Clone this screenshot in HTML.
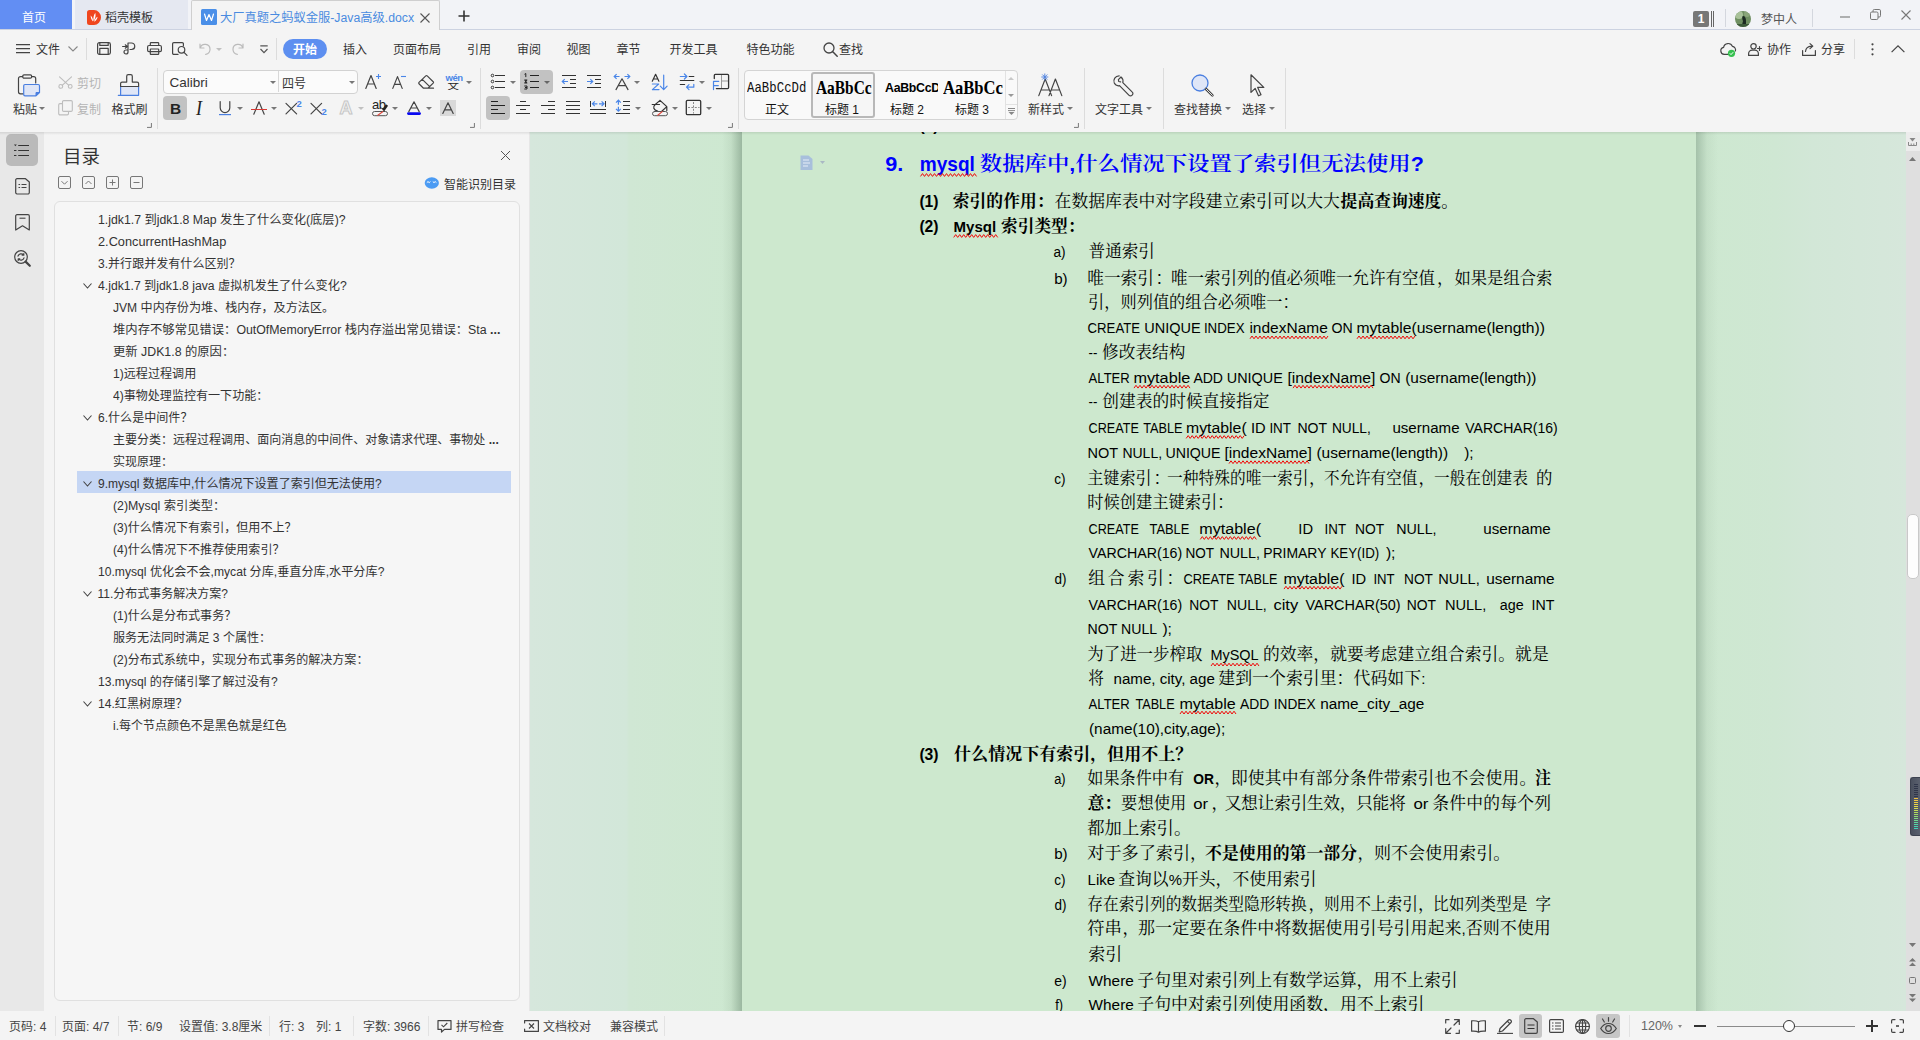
<!DOCTYPE html>
<html lang="zh-CN"><head><meta charset="utf-8"><title>大厂真题之蚂蚁金服-Java高级.docx</title>
<style>
html,body{margin:0;padding:0}
body{width:1920px;height:1040px;position:relative;overflow:hidden;background:#f4f4f4;
 font-family:"Liberation Sans","Noto Sans CJK SC",sans-serif;font-size:12px;color:#333;line-height:1}
.a{position:absolute}
.t{position:absolute;white-space:nowrap;line-height:1}
svg{position:absolute;overflow:visible}
.ic{fill:none;stroke:#444;stroke-width:1.2;stroke-linecap:round;stroke-linejoin:round}
/* tab bar */
#tabbar{left:0;top:0;width:1920px;height:29px;background:#f2f3f7;border-bottom:1px solid #ccd2e1}
#tab1{left:0;top:0;width:72px;height:29px;background:#628ef3;color:#fff}
#tab2{left:75px;top:0;width:113px;height:29px;background:#e5e8f1}
#tab3{left:191px;top:0;width:249px;height:30px;background:#f4f4f4;border:1px solid #cfcfcf;border-bottom:none;box-sizing:border-box;border-radius:2px 2px 0 0}
/* menubar */
#menubar{left:0;top:30px;width:1920px;height:36px;background:#f4f4f4}
#ribbon{left:0;top:66px;width:1920px;height:64px;background:#f4f4f4}
.sep{position:absolute;width:1px;background:#dcdcdc}
.m{position:absolute;top:44px;font-size:12px;color:#333;white-space:nowrap}
.dd{position:absolute;width:0;height:0;border-left:3.2px solid transparent;border-right:3.2px solid transparent;border-top:3.8px solid #777;margin-left:-0.4px}
.lbl{position:absolute;font-size:12px;color:#333;white-space:nowrap}
/* left */
#leftnav{left:0;top:132px;width:44px;height:879px;background:#e8e8e8}
#toc{left:44px;top:132px;width:485px;height:879px;background:#f4f4f4}
#tocbox{left:53.500px;top:201px;width:466px;height:800px;border:1px solid #e0e0e0;border-radius:6px;box-sizing:border-box;background:#f6f6f6}
.ti{position:absolute;font-size:12px;color:#333;white-space:nowrap;line-height:14px}
/* doc */
#docarea{left:530px;top:132px;width:1376px;height:879px;overflow:hidden;
 background:linear-gradient(90deg,#d6e7dc 0%,#d2e7d9 7%,#d0e7d4 7.200%,#cde8d0 15.400%,#cde8d0 84.700%,#cfe7d3 90.500%,#d2e7d7 93.200%,#d6e7db 100%)}
#page{left:742px;top:132px;width:954px;height:879px;background:#cde8ce}
.dl{position:absolute;white-space:nowrap;font-size:16.8px;line-height:20px;color:#000;font-family:"Liberation Sans","Noto Serif CJK SC",serif;transform-origin:0 50%}
.en{font-size:15.2px}
.b{font-weight:bold}
.wv{text-decoration:underline wavy #e03020 1px;text-underline-offset:2px;text-decoration-skip-ink:none}
#vscroll{left:1906px;top:132px;width:14px;height:879px;background:#dfdfdf}
#status{left:0;top:1011px;width:1920px;height:29px;background:#f4f4f4}
.st{position:absolute;top:1021px;font-size:12px;color:#444;white-space:nowrap}
</style></head><body>
<div class="a" id="tabbar"></div><div class="a" id="tab1"><span class="t" style="left:22px;top:11.8px;color:#fff">首页</span></div><div class="a" id="tab2">
<svg style="left:12px;top:10px" width="14" height="15" viewBox="0 0 14 15"><path d="M2.5 0H7a7 7.5 0 0 1 0 15H2.5A2.500 2.500 0 0 1 0 12.500v-10A2.500 2.500 0 0 1 2.500 0z" fill="#f0461e"/><path d="M3.600 5.500c.2 2.800 1 4.600 2.400 6 .1-2.300-.6-4.300-2.400-6zM8.300 2.800c-1.600 2.300-2.200 5-1.800 8.400 1.800-2.300 2.500-5 1.800-8.400zM10.600 6.800c-1.700 1-2.900 2.600-3.500 4.900 1.900-.8 3.100-2.400 3.500-4.900z" fill="#fff"/></svg>
<span class="t" style="left:30px;top:11.8px;color:#333">稻壳模板</span></div><div class="a" id="tab3">
<svg style="left:9px;top:8px" width="16" height="16" viewBox="0 0 16 16"><rect width="16" height="16" rx="1.5" fill="#4a8fe8"/><path d="M3.5 5l2 6.5L8 5.5l2.5 6 2-6.5" fill="none" stroke="#fff" stroke-width="1.2" stroke-linejoin="round" stroke-linecap="round"/></svg>
<span class="t" style="left:27.500px;top:10.800px;color:#4a8be0;transform:scaleX(1.021);transform-origin:0 50%">大厂真题之蚂蚁金服-Java高级.docx</span>
<svg style="left:228px;top:12px" width="10" height="10" viewBox="0 0 10 10"><path d="M0.5 0.5l9 9M9.5 0.5l-9 9" stroke="#555" stroke-width="1.1" fill="none"/></svg>
</div><svg style="left:458px;top:10px" width="12" height="12" viewBox="0 0 12 12"><path d="M6 0.5v11M0.5 6h11" stroke="#333" stroke-width="1.6" fill="none"/></svg><div class="a" style="left:1693px;top:11px;width:16px;height:16px;background:#777;border-radius:2px;color:#fff;font-size:12px;font-weight:bold;text-align:center;line-height:16px">1</div><div class="a" style="left:1711px;top:11px;width:1px;height:16px;background:#666"></div><div class="a" style="left:1713px;top:11px;width:1px;height:16px;background:#666"></div><div class="sep" style="left:1725px;top:9px;height:18px;background:#d4d7de"></div><svg style="left:1735px;top:11px" width="16" height="16" viewBox="0 0 16 16"><defs><clipPath id="av"><circle cx="8" cy="8" r="8"/></clipPath></defs><g clip-path="url(#av)"><rect width="16" height="16" fill="#6f8f62"/><circle cx="4" cy="4" r="4" fill="#a9c29a"/><circle cx="12" cy="3" r="3" fill="#8aa57a"/><path d="M8 5c2 0 3 2 3 5l0 4H7l1-4c-1-2-1-5 0-5z" fill="#1c2a22"/><rect y="13" width="16" height="3" fill="#3d5a3a"/></g></svg><span class="t" style="left:1761px;top:14.2px;color:#555">梦中人</span><div class="sep" style="left:1812px;top:9px;height:18px;background:#d4d7de"></div><svg style="left:1840px;top:16px" width="10" height="2" viewBox="0 0 10 2"><path d="M0 1h10" stroke="#777" stroke-width="1.1"/></svg><svg style="left:1870px;top:9px" width="11" height="11" viewBox="0 0 11 11"><rect x="0.5" y="3" width="7.5" height="7.5" rx="1.3" fill="none" stroke="#777" stroke-width="1"/><path d="M3 3V1.8A1.3 1.3 0 0 1 4.3 0.5H9.2A1.3 1.3 0 0 1 10.5 1.8V6.7A1.3 1.3 0 0 1 9.2 8H8" fill="none" stroke="#777" stroke-width="1"/></svg><svg style="left:1901px;top:10px" width="10" height="10" viewBox="0 0 10 10"><path d="M0.5 0.5l9 9M9.5 0.5l-9 9" stroke="#777" stroke-width="1.1" fill="none"/></svg><div class="a" id="menubar"></div><div class="a" id="ribbon"></div><svg style="left:16px;top:44px" width="14" height="10" viewBox="0 0 14 10"><path d="M0 0.6h14M0 4.6h14M0 8.6h14" stroke="#444" stroke-width="1.2"/></svg><span class="m" style="left:36px">文件</span><svg style="left:68px;top:46px" width="10" height="6" viewBox="0 0 10 6"><path d="M0.5 0.5L5 5l4.5-4.5" stroke="#888" stroke-width="1.1" fill="none"/></svg><div class="sep" style="left:86px;top:38px;height:22px"></div><svg style="left:97px;top:42px" width="14" height="13" viewBox="0 0 14 13"><rect class="ic" x="0.600" y="0.600" width="12.800" height="11.800" rx="1.800"/><path class="ic" d="M2.800 0.800v2.600h8.400V0.800M2.800 12.200V6.400h8.400v5.800"/></svg><svg style="left:122px;top:42px" width="15" height="14" viewBox="0 0 15 14"><path class="ic" d="M6 1h3.5a3 3 0 0 1 0 6.5H8M6 1v9a2 2 0 1 1-2-2h2M0.6 4.5h4.4M3.3 2.8l1.9 1.7-1.9 1.7"/></svg><svg style="left:147px;top:42px" width="15" height="13" viewBox="0 0 15 13"><path class="ic" d="M3.3 3.5V1.4a.8.8 0 0 1 .8-.8h6.8a.8.8 0 0 1 .8.8v2.1"/><rect class="ic" x="0.6" y="3.5" width="13.8" height="6.2" rx="1.4"/><rect class="ic" x="3.3" y="7" width="8.4" height="5.4" rx="0.6" fill="#f4f4f4"/></svg><svg style="left:172px;top:42px" width="16" height="14" viewBox="0 0 16 14"><path class="ic" d="M6 12.4H1.8a1.2 1.2 0 0 1-1.2-1.2V1.8A1.2 1.2 0 0 1 1.8.6h8.4a1.2 1.2 0 0 1 1.2 1.2v2"/><circle class="ic" cx="9.5" cy="7.8" r="3.3"/><path class="ic" d="M12 10.4l3 3"/></svg><svg style="left:199px;top:43px" width="13" height="12" viewBox="0 0 13 12"><path d="M1 1v4h4M1.2 5a5 5 0 1 1 5.5 6.3" fill="none" stroke="#bbb" stroke-width="1.2" stroke-linecap="round" stroke-linejoin="round"/></svg><div class="dd" style="left:216px;top:48px;border-top-color:#c0c0c0"></div><svg style="left:231px;top:43px" width="13" height="12" viewBox="0 0 13 12"><path d="M12 1v4H8M11.8 5a5 5 0 1 0-5.5 6.3" fill="none" stroke="#bbb" stroke-width="1.2" stroke-linecap="round" stroke-linejoin="round"/></svg><svg style="left:260px;top:45px" width="8" height="9" viewBox="0 0 8 9"><path d="M0.3 0.8h7.4M0.5 4l3.5 3.6L7.5 4" stroke="#555" stroke-width="1.2" fill="none"/></svg><div class="sep" style="left:276px;top:38px;height:22px"></div><div class="a" style="left:283px;top:39px;width:44px;height:20px;border-radius:10px;background:#5d8ff0"></div><span class="m" style="left:293px;color:#fff;font-weight:bold">开始</span><span class="m" style="left:343px">插入</span><span class="m" style="left:393px">页面布局</span><span class="m" style="left:467px">引用</span><span class="m" style="left:517px">审阅</span><span class="m" style="left:566.5px">视图</span><span class="m" style="left:616.5px">章节</span><span class="m" style="left:669.5px">开发工具</span><span class="m" style="left:746.5px">特色功能</span><span class="m" style="left:839px">查找</span><svg style="left:823px;top:42px" width="15" height="15" viewBox="0 0 15 15"><circle cx="6" cy="6" r="5" fill="none" stroke="#444" stroke-width="1.3"/><path d="M9.8 9.8l4.4 4.4" stroke="#444" stroke-width="1.5" stroke-linecap="round"/></svg><svg style="left:1720px;top:43px" width="17" height="14" viewBox="0 0 17 14"><path class="ic" d="M8.5 11.4H4.2A3.6 3.6 0 0 1 3.6 4.3 4.6 4.6 0 0 1 12.4 3.4 3.5 3.5 0 0 1 15.4 8"/><circle cx="11.5" cy="10.3" r="3.6" fill="#35c04f"/><path d="M9.8 10.3l1.2 1.3 2.2-2.4" stroke="#fff" stroke-width="1" fill="none"/></svg><svg style="left:1748px;top:43px" width="14" height="13" viewBox="0 0 14 13"><circle class="ic" cx="5.5" cy="3.3" r="2.7"/><path class="ic" d="M0.6 12.4v-1.6a3.6 3.6 0 0 1 3.6-3.6h2.6a3.6 3.6 0 0 1 3.6 3.6v1.6zM11.5 3.5v4M9.5 5.5h4"/></svg><span class="m" style="left:1767px">协作</span><svg style="left:1802px;top:43px" width="14" height="13" viewBox="0 0 14 13"><path class="ic" d="M0.6 7.5v4.9h12.8V7.5M3.5 8.5c.3-3.2 2.5-5.2 6-5.4M8 0.6l2.8 2.5L8 5.6"/></svg><span class="m" style="left:1821px">分享</span><div class="sep" style="left:1854px;top:39px;height:20px"></div><svg style="left:1871px;top:43px" width="3" height="13" viewBox="0 0 3 13"><circle cx="1.5" cy="1.3" r="1.1" fill="#444"/><circle cx="1.5" cy="6.3" r="1.1" fill="#444"/><circle cx="1.5" cy="11.3" r="1.1" fill="#444"/></svg><svg style="left:1891px;top:45px" width="14" height="8" viewBox="0 0 14 8"><path d="M0.6 7.2L7 0.8l6.4 6.4" stroke="#444" stroke-width="1.2" fill="none"/></svg><svg style="left:17px;top:74px" width="24" height="23" viewBox="0 0 24 23"><path class="ic" stroke="#2a2a2a" d="M5.500 2.600H3.500a2 2 0 0 0-2 2v13.200a2 2 0 0 0 2 2h3M15 2.600h1.700a2 2 0 0 1 2 2V9"/><rect class="ic" stroke="#2a2a2a" x="5.800" y="0.800" width="8.800" height="3.400" rx="1.200" fill="#f4f4f4"/><path d="M8 10.5h13.2a1.3 1.3 0 0 1 1.3 1.3v6.7l-3.5 3.3H8a1.3 1.3 0 0 1-1.3-1.3v-8.7A1.3 1.3 0 0 1 8 10.5z" fill="#dfe6f7" stroke="#4a7fe0" stroke-width="1.2" stroke-linejoin="round"/><path d="M19 21.8v-3.3h3.5" fill="#4a7fe0" stroke="#4a7fe0" stroke-width="1"/></svg><span class="lbl" style="left:13px;top:104.1px;color:#333">粘贴</span><div class="dd" style="left:39.7px;top:106.8px;border-top-color:#777"></div><svg style="left:58px;top:76px" width="15" height="13" viewBox="0 0 15 13"><g fill="none" stroke="#bdbdbd" stroke-width="1.1" stroke-linecap="round"><path d="M1.5 0.8l9.3 8.6M13.5 0.8L4.2 9.4"/><circle cx="2.8" cy="10.4" r="1.9"/><circle cx="12.2" cy="10.4" r="1.9"/></g></svg><span class="lbl" style="left:77px;top:78px;color:#b4b4b4">剪切</span><svg style="left:58px;top:100px" width="15" height="16" viewBox="0 0 15 16"><g fill="none" stroke="#bdbdbd" stroke-width="1.1" stroke-linejoin="round"><rect x="4.5" y="0.6" width="9.8" height="10.8" rx="1.2"/><path d="M4.5 3.6H2a1.3 1.3 0 0 0-1.3 1.3v8.7A1.3 1.3 0 0 0 2 14.9h7.2a1.3 1.3 0 0 0 1.3-1.3v-2.2"/></g></svg><span class="lbl" style="left:77px;top:104.1px;color:#b4b4b4">复制</span><svg style="left:118px;top:74px" width="22" height="23" viewBox="0 0 22 23"><path d="M2.600 12.500h18v8.800H0.300h2.300z" fill="#dfe6f7" stroke="#4a7fe0" stroke-width="1.200" stroke-linejoin="round"/><path class="ic" stroke="#2a2a2a" d="M8.700 8.100V2.200a1.500 1.500 0 0 1 1.500-1.500h2.600a1.500 1.500 0 0 1 1.500 1.500v5.900h4.800a1.500 1.500 0 0 1 1.500 1.500v2.900H2.600V9.600a1.500 1.500 0 0 1 1.500-1.500z"/></svg><span class="lbl" style="left:111.5px;top:104.1px;color:#333">格式刷</span><svg style="left:147px;top:123px" width="5" height="5" viewBox="0 0 5 5"><path d="M4.4 0v4.4H0" stroke="#777" stroke-width="1" fill="none"/></svg><div class="sep" style="left:157px;top:68px;height:61px"></div><div class="a" style="left:163px;top:70px;width:195px;height:24px;background:#fbfbfb;border:1px solid #d2d2d2;border-radius:4px;box-sizing:border-box"></div><div class="a" style="left:278px;top:71px;width:1px;height:21px;background:#d8d8d8"></div><span class="lbl" style="left:169.500px;top:75.500px;font-size:13.500px">Calibri</span><div class="dd" style="left:270px;top:81px;border-top-color:#777"></div><span class="lbl" style="left:282px;top:77.5px;color:#333">四号</span><div class="dd" style="left:349px;top:81px;border-top-color:#777"></div><svg style="left:365px;top:74px" width="17" height="15" viewBox="0 0 17 15"><path class="ic" d="M0.8 14.4L6 1.6l5.2 12.8M2.6 10h6.8"/><path d="M11 2.500h5M13.500 0v5" stroke="#4a86e8" stroke-width="1.100"/></svg><svg style="left:392px;top:74px" width="15" height="15" viewBox="0 0 15 15"><path class="ic" d="M0.8 14.4L5.5 2.6l4.7 11.8M2.4 10.4h6.2"/><path d="M9 2.500h5" stroke="#4a86e8" stroke-width="1.100"/></svg><svg style="left:418px;top:75px" width="17" height="15" viewBox="0 0 17 15"><path class="ic" d="M5.5 13.2L1 8.8a1 1 0 0 1 0-1.4L7.8 0.9a1 1 0 0 1 1.4 0l6 5.8a1 1 0 0 1 0 1.4l-5.3 5.1zM4.3 4.4l7.4 7.2M5.5 13.2h10"/></svg><span class="lbl" style="left:445.500px;top:73px;font-size:9.500px;color:#4a86e8;font-weight:bold;letter-spacing:-0.500px">wén</span><div class="a" style="left:446px;top:83.300px;width:16px;height:8px;overflow:hidden"><span class="lbl" style="left:1.500px;top:-1.500px;font-size:11.500px;color:#222;transform:scaleY(0.820);transform-origin:0 0">文</span></div><div class="dd" style="left:466.5px;top:81px;border-top-color:#777"></div><div class="a" style="left:163px;top:96px;width:24px;height:24px;background:#c2c2c2;border-radius:4px"></div><span class="lbl" style="left:170px;top:101px;font-size:15.500px;font-weight:bold;color:#222">B</span><span class="lbl" style="left:195.500px;top:98px;font-size:20px;font-style:italic;color:#222;font-family:'Liberation Serif',serif;transform:scaleX(0.900);transform-origin:0 0">I</span><svg style="left:219px;top:101px" width="12" height="15" viewBox="0 0 12 15"><path class="ic" d="M1.2 0.6v6.2a4.8 4.8 0 0 0 9.6 0V0.6"/><path d="M0 13.6h12" stroke="#4a7fe0" stroke-width="1.2"/></svg><div class="dd" style="left:237px;top:107px;border-top-color:#777"></div><svg style="left:251px;top:101px" width="16" height="14" viewBox="0 0 16 14"><path class="ic" d="M2.8 13.2L8 0.8l5.2 12.4"/><path d="M0 8.500h16" stroke="#d83a34" stroke-width="1"/></svg><div class="dd" style="left:271px;top:107px;border-top-color:#777"></div><svg style="left:285px;top:100px" width="17" height="15" viewBox="0 0 17 15"><path class="ic" d="M1 3.300l10.600 10.600M11.600 3.300L1 13.900"/><text x="11.600" y="7.300" font-size="9.500" font-weight="bold" fill="#4a86e8" font-family="Liberation Sans,sans-serif">2</text></svg><svg style="left:310px;top:100px" width="17" height="16" viewBox="0 0 17 16"><path class="ic" d="M1 3.300l10.600 10.600M11.600 3.300L1 13.900"/><text x="11.600" y="15.300" font-size="9.500" font-weight="bold" fill="#4a86e8" font-family="Liberation Sans,sans-serif">2</text></svg><svg style="left:338px;top:99px" width="16" height="17" viewBox="0 0 16 17"><text x="8" y="15.300" text-anchor="middle" font-size="18" font-weight="bold" font-family="Liberation Sans,sans-serif" fill="#f4f4f4" stroke="#c6c6c6" stroke-width="1">A</text></svg><div class="dd" style="left:358px;top:107px;border-top-color:#c0c0c0"></div><span class="lbl" style="left:372px;top:98px;font-size:13px;color:#222;letter-spacing:-0.600px">ab</span><svg style="left:372px;top:100px" width="17" height="17" viewBox="0 0 17 17"><rect x="0.500" y="11.500" width="15" height="4.200" rx="2.100" fill="#f4f4f4" stroke="#555" stroke-width="1"/><path d="M5.500 15.500l5.500-4" stroke="#e0453a" stroke-width="1.100"/><path d="M15 5l-3.800 5.600" stroke="#222" stroke-width="2.600" stroke-linecap="butt"/></svg><div class="dd" style="left:392px;top:107px;border-top-color:#777"></div><svg style="left:407px;top:101px" width="14" height="15" viewBox="0 0 14 15"><path class="ic" d="M1.8 10.6L7 0.8l5.2 9.8M3.6 7h6.8"/><rect x="0" y="11.200" width="14" height="2.800" rx="1.400" fill="#0a0af0"/></svg><div class="dd" style="left:426px;top:107px;border-top-color:#777"></div><div class="a" style="left:440px;top:100px;width:16px;height:16px;background:#d9d9d9"></div><svg style="left:442px;top:102px" width="12" height="12" viewBox="0 0 12 12"><path class="ic" d="M0.8 11.4L6 0.8l5.2 10.6M2.6 7.8h6.8"/></svg><svg style="left:470px;top:123px" width="5" height="5" viewBox="0 0 5 5"><path d="M4.4 0v4.4H0" stroke="#777" stroke-width="1" fill="none"/></svg><div class="sep" style="left:480px;top:68px;height:61px"></div><svg style="left:490px;top:73px" width="6" height="17" viewBox="0 0 6 17"><g fill="none" stroke="#333" stroke-width="1"><circle cx="2.500" cy="2.500" r="1.300"/><circle cx="2.500" cy="8.500" r="1.300"/><circle cx="2.500" cy="14.500" r="1.300"/></g></svg><div class="a" style="left:495px;top:75px;width:10px;height:1px;background:#333"></div><div class="a" style="left:495px;top:81px;width:10px;height:1px;background:#333"></div><div class="a" style="left:495px;top:87px;width:10px;height:1px;background:#333"></div><div class="dd" style="left:510px;top:81px;border-top-color:#777"></div><div class="a" style="left:520px;top:70px;width:33px;height:24px;background:#c2c2c2;border-radius:4px"></div><svg style="left:524px;top:73px" width="4" height="17" viewBox="0 0 4 17"><path d="M0.500 1.300l1.300-.800v3.600M0.300 7h3M0.300 10h3M1 7l1.600 3M2.600 7L1 10M0.300 13h2.700v3H0.300M1 14.500h2" stroke="#222" stroke-width="1" fill="none"/></svg><div class="a" style="left:529.5px;top:75px;width:9.5px;height:1px;background:#222"></div><div class="a" style="left:529.5px;top:81px;width:9.5px;height:1px;background:#222"></div><div class="a" style="left:529.5px;top:87px;width:9.5px;height:1px;background:#222"></div><div class="dd" style="left:544px;top:81px;border-top-color:#666"></div><div class="a" style="left:562px;top:75px;width:14px;height:1px;background:#333"></div><div class="a" style="left:570px;top:79px;width:6px;height:1px;background:#333"></div><div class="a" style="left:570px;top:83px;width:6px;height:1px;background:#333"></div><div class="a" style="left:562px;top:87px;width:14px;height:1px;background:#333"></div><svg style="left:0;top:0" width="1" height="1"><path d="M562.3 81.5H568M564.6999999999999 79.1l-2.400 2.400 2.400 2.400" stroke="#4a86e8" stroke-width="1.200" fill="none"/></svg><div class="a" style="left:587px;top:75px;width:14px;height:1px;background:#333"></div><div class="a" style="left:595px;top:79px;width:6px;height:1px;background:#333"></div><div class="a" style="left:595px;top:83px;width:6px;height:1px;background:#333"></div><div class="a" style="left:587px;top:87px;width:14px;height:1px;background:#333"></div><svg style="left:0;top:0" width="1" height="1"><path d="M587 81.5H592.7M590.3000000000001 79.1l2.400 2.400-2.400 2.400" stroke="#4a86e8" stroke-width="1.200" fill="none"/></svg><svg style="left:0;top:0" width="1" height="1"><path d="M614.2 76.5H619.5M616.6 74.1l-2.400 2.400 2.400 2.400" stroke="#4a86e8" stroke-width="1.200" fill="none"/></svg><svg style="left:0;top:0" width="1" height="1"><path d="M624.5 76.5H629.8M627.4 74.1l2.400 2.400-2.400 2.400" stroke="#4a86e8" stroke-width="1.200" fill="none"/></svg><svg style="left:615px;top:78px" width="14" height="12" viewBox="0 0 14 12"><path class="ic" stroke="#333" d="M1 11.600L7 0.800l6 10.800M3.300 7.600h7.400"/></svg><div class="dd" style="left:634px;top:81px;border-top-color:#777"></div><div class="a" style="left:486px;top:96px;width:24px;height:24px;background:#c2c2c2;border-radius:4px"></div><div class="a" style="left:491px;top:101px;width:7px;height:1px;background:#222"></div><div class="a" style="left:491px;top:105px;width:14px;height:1px;background:#222"></div><div class="a" style="left:491px;top:109px;width:7px;height:1px;background:#222"></div><div class="a" style="left:491px;top:113px;width:14px;height:1px;background:#222"></div><div class="a" style="left:520px;top:101px;width:6px;height:1px;background:#333"></div><div class="a" style="left:516px;top:105px;width:14px;height:1px;background:#333"></div><div class="a" style="left:520px;top:109px;width:6px;height:1px;background:#333"></div><div class="a" style="left:516px;top:113px;width:14px;height:1px;background:#333"></div><div class="a" style="left:548px;top:101px;width:7px;height:1px;background:#333"></div><div class="a" style="left:541px;top:105px;width:14px;height:1px;background:#333"></div><div class="a" style="left:548px;top:109px;width:7px;height:1px;background:#333"></div><div class="a" style="left:541px;top:113px;width:14px;height:1px;background:#333"></div><div class="a" style="left:566px;top:101px;width:14px;height:1px;background:#333"></div><div class="a" style="left:566px;top:105px;width:14px;height:1px;background:#333"></div><div class="a" style="left:566px;top:109px;width:14px;height:1px;background:#333"></div><div class="a" style="left:566px;top:113px;width:14px;height:1px;background:#333"></div><div class="a" style="left:590px;top:101px;width:1px;height:6px;background:#333"></div><div class="a" style="left:605px;top:101px;width:1px;height:6px;background:#333"></div><svg style="left:0;top:0" width="1" height="1"><path d="M592.4 103.8H597.4M594.8 101.39999999999999l-2.400 2.400 2.400 2.400" stroke="#4a86e8" stroke-width="1.200" fill="none"/></svg><svg style="left:0;top:0" width="1" height="1"><path d="M599 103.8H604M601.6 101.39999999999999l2.400 2.400-2.400 2.400" stroke="#4a86e8" stroke-width="1.200" fill="none"/></svg><div class="a" style="left:590px;top:109px;width:16px;height:1px;background:#333"></div><div class="a" style="left:590px;top:113px;width:16px;height:1px;background:#333"></div><svg style="left:0;top:0" width="1" height="1"><path d="M618.4 100.2V104.8M616.0 102.60000000000001l2.400-2.400 2.400 2.400" stroke="#4a86e8" stroke-width="1.200" fill="none"/></svg><svg style="left:0;top:0" width="1" height="1"><path d="M618.4 106.8V111.2M616.0 108.8l2.400 2.400 2.400-2.400" stroke="#4a86e8" stroke-width="1.200" fill="none"/></svg><div class="a" style="left:623px;top:101px;width:7px;height:1px;background:#333"></div><div class="a" style="left:623px;top:105px;width:7px;height:1px;background:#333"></div><div class="a" style="left:623px;top:109px;width:7px;height:1px;background:#333"></div><div class="a" style="left:616px;top:113px;width:14px;height:1px;background:#333"></div><div class="dd" style="left:635px;top:107px;border-top-color:#777"></div><svg style="left:640px;top:66px" width="100" height="64" viewBox="640 66 100 64"><g fill="none" stroke-width="1.200" stroke-linecap="round" stroke-linejoin="round"><path d="M652.300 81.200L655.600 74.300 658.900 81.200M653.500 79h4.200" stroke="#333"/><path d="M652.400 84h6.300l-6.300 5.600h6.600M663.700 75.200v14.300M660.300 86.200l3.400 3.400 3.400-3.400" stroke="#4a86e8"/><path d="M689.200 76.500h4.600M680.300 80.500h13.500M680.300 84.500h4.300" stroke="#333"/><path d="M680.300 76.500h6.500M684.400 74l2.500 2.500-2.500 2.500M693.800 84.300v2.900h-7.200M689 84.700l-2.500 2.500 2.500 2.500" stroke="#4a86e8"/><path d="M721.500 74.500v14M721.500 81h7" stroke="#999" stroke-width="1"/><path d="M714.300 78.600v-3.200a1 1 0 0 1 1-1h12.300a1 1 0 0 1 1 1v12.200a1 1 0 0 1-1 1H716.400" stroke="#333" stroke-width="1.300"/><path d="M713.500 89.600v-8.200h5.200M713.500 85.600h4.800" stroke="#4a86e8"/><path d="M660 100.400l6.800 6.200v4M660 100.400l-5 4.300c-2.400 2.200-1.600 5.300 2.600 6.500M666.800 106.600l-5 4.600M652.200 104.500h7.300" stroke="#333"/><rect x="652.500" y="111.500" width="15" height="4.200" rx="2.100" fill="#f4f4f4" stroke="#555" stroke-width="1"/><path d="M657.800 115.200l4.400-3.600" stroke="#e0453a"/><rect x="686.300" y="100.300" width="14.400" height="14.400" rx="1.200" stroke="#333" stroke-width="1.300"/><path d="M693.500 102v11.500M688 107.500h11.500" stroke="#888" stroke-width="1" stroke-dasharray="2 1.400" stroke-linecap="butt"/></g></svg><div class="dd" style="left:699px;top:81px;border-top-color:#777"></div><div class="dd" style="left:672px;top:107px;border-top-color:#777"></div><div class="dd" style="left:706px;top:107px;border-top-color:#777"></div><svg style="left:728px;top:123px" width="5" height="5" viewBox="0 0 5 5"><path d="M4.4 0v4.4H0" stroke="#777" stroke-width="1" fill="none"/></svg><div class="sep" style="left:738px;top:68px;height:61px"></div><div class="a" style="left:744px;top:70px;width:274px;height:50px;background:#f9f9f9;border:1px solid #d4d4d4;border-radius:4px;box-sizing:border-box"></div><span class="lbl" style="left:747px;top:82.800px;font-size:12.300px;color:#111;font-family:'Liberation Mono','Noto Serif CJK SC',serif;letter-spacing:0.050px;transform:scaleY(1.150);transform-origin:0 100%">AaBbCcDd</span><span class="lbl" style="left:765px;top:104.1px;color:#111">正文</span><div class="a" style="left:811px;top:72px;width:64px;height:46px;border:2px solid #b8b8b8;border-radius:3px;box-sizing:border-box;background:#f6f6f6"></div><div class="a" style="left:813px;top:74px;width:60px;height:26px;overflow:hidden"><span class="lbl" style="left:3px;top:3.500px;font-size:19.500px;font-weight:bold;color:#000;font-family:'Liberation Serif',serif;transform:scaleX(0.790);transform-origin:0 50%">AaBbCc</span></div><span class="lbl" style="left:825px;top:104.1px;color:#111">标题 1</span><div class="a" style="left:878px;top:74px;width:60px;height:26px;overflow:hidden"><span class="lbl" style="left:6.5px;top:7px;font-size:13px;font-weight:bold;color:#000;font-family:'Liberation Sans',sans-serif;letter-spacing:-0.300px;transform:scaleX(0.950);transform-origin:0 50%">AaBbCcD</span></div><span class="lbl" style="left:890px;top:104.1px;color:#111">标题 2</span><div class="a" style="left:940px;top:74px;width:63.5px;height:26px;overflow:hidden"><span class="lbl" style="left:2.500px;top:3.500px;font-size:19.500px;font-weight:bold;color:#000;font-family:'Liberation Serif',serif;transform:scaleX(0.850);transform-origin:0 50%">AaBbCc</span></div><span class="lbl" style="left:955px;top:104.1px;color:#111">标题 3</span><div class="a" style="left:1005px;top:71px;width:1px;height:48px;background:#e2e2e2"></div><div class="a" style="left:1006px;top:104px;width:11px;height:1px;background:#e2e2e2"></div><div class="dd" style="left:1008.5px;top:77px;border-top:none;border-bottom:3.5px solid #c8c8c8"></div><div class="dd" style="left:1008.5px;top:94px;border-top-color:#999"></div><svg style="left:1008px;top:108px" width="7" height="7" viewBox="0 0 7 7"><path d="M0 0.5h7M0 2.6h7" stroke="#888" stroke-width="1"/><path d="M0.5 4l3 3 3-3z" fill="#888"/></svg><svg style="left:1038px;top:73px" width="25" height="24" viewBox="0 0 25 24"><path class="ic" d="M0.8 22.6L7.2 6l6.4 16.6M3 17h8.4M11 22.6L17.4 6l6.4 16.6M13.2 17h8.4" stroke-width="1.1"/><path d="M6.8 0.5v7M3.3 4h7M4.3 1.5l5 5M9.3 1.5l-5 5" stroke="#4a7fe0" stroke-width="0.9"/></svg><span class="lbl" style="left:1028px;top:104.1px;color:#333">新样式</span><div class="dd" style="left:1067.5px;top:106.5px;border-top-color:#777"></div><svg style="left:1074px;top:123px" width="5" height="5" viewBox="0 0 5 5"><path d="M4.4 0v4.4H0" stroke="#777" stroke-width="1" fill="none"/></svg><div class="sep" style="left:1084px;top:68px;height:61px"></div><svg style="left:1113px;top:75px" width="22" height="22" viewBox="0 0 22 22"><path class="ic" d="M6.2 0.8a5.2 5.2 0 0 0-4.9 7.3c.8 1.7 2.8 3 5.2 2.6l9.6 9.6a1.9 1.9 0 0 0 2.8 0l.4-.4a1.9 1.9 0 0 0 0-2.8L9.8 7.6C10.400 5.300 9.600 3.300 8 2L5.400 4.600l.3 1.900 1.900.3"/></svg><span class="lbl" style="left:1095px;top:104.1px;color:#333">文字工具</span><div class="dd" style="left:1146.5px;top:106.5px;border-top-color:#777"></div><div class="sep" style="left:1163px;top:68px;height:61px"></div><svg style="left:1191px;top:74px" width="23" height="23" viewBox="0 0 23 23"><circle cx="9" cy="9" r="8" fill="#dfe6f7" stroke="#4a7fe0" stroke-width="1.3"/><path d="M15 15l6.4 6.4" stroke="#444" stroke-width="2.6" stroke-linecap="round"/><path d="M15 15l6.4 6.4" stroke="#f4f4f4" stroke-width="0.9" stroke-linecap="round"/></svg><span class="lbl" style="left:1174px;top:104.1px;color:#333">查找替换</span><div class="dd" style="left:1225.5px;top:106.5px;border-top-color:#777"></div><svg style="left:1250px;top:74px" width="16" height="23" viewBox="0 0 16 23"><path class="ic" d="M1 0.8v17.6l4.200-4 3.300 7.400 2.500-1.100-3.300-7.300h6.100z"/></svg><span class="lbl" style="left:1242px;top:104.1px;color:#333">选择</span><div class="dd" style="left:1269.5px;top:106.5px;border-top-color:#777"></div><div class="sep" style="left:1285px;top:68px;height:61px"></div><div class="a" id="leftnav"></div><div class="a" id="toc"></div><div class="a" id="tocbox"></div><div class="a" style="left:529px;top:132px;width:2px;height:879px;background:#e6e6e6"></div><div class="a" style="left:6px;top:134px;width:32px;height:32px;border-radius:5px;background:#bababa"></div><svg style="left:14px;top:143px" width="16" height="14" viewBox="0 0 16 14"><path d="M4.200 2.500H15M4.200 7.500H15M0 12.500h2.400M4.200 12.500H15M0 7.500h2.400" stroke="#333" stroke-width="1.100" fill="none"/><path d="M0 1.400h2.800L1.400 3.200z" fill="#333"/></svg><svg style="left:15px;top:178px" width="15" height="17" viewBox="0 0 15 17"><path class="ic" d="M2 0.7h8.5l3.800 3.300v10.500a1.500 1.500 0 0 1-1.500 1.500H2A1.500 1.500 0 0 1 0.700 14.700V2A1.300 1.300 0 0 1 2 0.700z"/><path d="M3.500 6.500h1.600M6.500 6.500h5M3.500 9.500h1.600M6.500 9.500h5" stroke="#444" stroke-width="1.100"/></svg><svg style="left:15px;top:214px" width="15" height="17" viewBox="0 0 15 17"><path class="ic" d="M2 0.700h11a1.300 1.300 0 0 1 1.300 1.300v14l-6.800-4.200L0.700 16V2A1.300 1.300 0 0 1 2 0.700z"/><path d="M4.500 4.200h6" stroke="#444" stroke-width="1.1"/></svg><svg style="left:14px;top:250px" width="17" height="17" viewBox="0 0 17 17"><circle class="ic" cx="7" cy="7" r="6.300"/><path d="M11.600 11.600l4.200 4.200" stroke="#444" stroke-width="2.200" stroke-linecap="round"/><path class="ic" d="M4 6.200a3.200 3.200 0 0 1 5.600-1.200M10 7.800a3.200 3.200 0 0 1-5.600 1.200M9.800 3.600v1.600H8.200M4.200 10.400V8.800h1.600" stroke-width="1"/></svg><span class="t" style="left:63px;top:148px;font-size:18.500px;color:#333">目录</span><svg style="left:501px;top:151px" width="9" height="9" viewBox="0 0 9 9"><path d="M0 0l9 9M9 0l-9 9" stroke="#555" stroke-width="1" fill="none"/></svg><svg style="left:58px;top:176px" width="13" height="13" viewBox="0 0 13 13"><rect x="0.500" y="0.500" width="12" height="12" rx="1.500" fill="none" stroke="#777" stroke-width="1"/><path d="M3.500 5.200l3 3 3-3" stroke="#777" stroke-width="1" fill="none"/></svg><svg style="left:82px;top:176px" width="13" height="13" viewBox="0 0 13 13"><rect x="0.500" y="0.500" width="12" height="12" rx="1.500" fill="none" stroke="#777" stroke-width="1"/><path d="M3.500 8l3-3 3 3" stroke="#777" stroke-width="1" fill="none"/></svg><svg style="left:106px;top:176px" width="13" height="13" viewBox="0 0 13 13"><rect x="0.500" y="0.500" width="12" height="12" rx="1.500" fill="none" stroke="#777" stroke-width="1"/><path d="M3.500 6.500h6M6.500 3.500v6" stroke="#777" stroke-width="1" fill="none"/></svg><svg style="left:130px;top:176px" width="13" height="13" viewBox="0 0 13 13"><rect x="0.500" y="0.500" width="12" height="12" rx="1.500" fill="none" stroke="#777" stroke-width="1"/><path d="M3.500 6.500h6" stroke="#777" stroke-width="1" fill="none"/></svg><svg style="left:424px;top:177px" width="15" height="12" viewBox="0 0 15 12"><ellipse cx="7.800" cy="6" rx="7.100" ry="5.800" fill="#4b9bf3"/><path d="M2.800 5.600l1.200-1 1.200 1 1.200-1M8.800 4.600l1.200 1 1.200-1 1.200 1" stroke="#fff" stroke-width="1" fill="none"/></svg><span class="t" style="left:444px;top:178.600px;font-size:12px;color:#333">智能识别目录</span><span class="ti" id="ti0" style="left:97.5px;top:212.7px;transform-origin:0 50%;transform:scaleX(1.0227)">1.jdk1.7 到jdk1.8 Map 发生了什么变化(底层)?</span><span class="ti" id="ti1" style="left:97.5px;top:234.7px;transform-origin:0 50%;transform:scaleX(1.0622)">2.ConcurrentHashMap</span><span class="ti" id="ti2" style="left:97.5px;top:256.7px;transform-origin:0 50%;transform:scaleX(1.004)">3.并行跟并发有什么区别？</span><svg style="left:83px;top:282.6px" width="9" height="6" viewBox="0 0 9 6"><path d="M0.500 0.500l4 4.500 4-4.500" stroke="#444" stroke-width="1.100" fill="none"/></svg><span class="ti" id="ti3" style="left:97.5px;top:278.7px;transform-origin:0 50%;transform:scaleX(1.0164)">4.jdk1.7 到jdk1.8 java 虚拟机发生了什么变化?</span><span class="ti" id="ti4" style="left:113px;top:300.7px;transform-origin:0 50%;transform:scaleX(1.008)">JVM 中内存份为堆、栈内存，及方法区。</span><span class="ti" id="ti5" style="left:113px;top:322.7px;transform-origin:0 50%;transform:scaleX(1.0282)">堆内存不够常见错误：OutOfMemoryError 栈内存溢出常见错误：Sta <b>...</b></span><span class="ti" id="ti6" style="left:113px;top:344.7px;transform-origin:0 50%;transform:scaleX(1.027)">更新 JDK1.8 的原因：</span><span class="ti" id="ti7" style="left:113px;top:366.7px;transform-origin:0 50%;transform:scaleX(1.0073)">1)远程过程调用</span><span class="ti" id="ti8" style="left:113px;top:388.7px;transform-origin:0 50%;transform:scaleX(1.004)">4)事物处理监控有一下功能：</span><svg style="left:83px;top:414.6px" width="9" height="6" viewBox="0 0 9 6"><path d="M0.500 0.500l4 4.500 4-4.500" stroke="#444" stroke-width="1.100" fill="none"/></svg><span class="ti" id="ti9" style="left:97.5px;top:410.7px;transform-origin:0 50%;transform:scaleX(1.005)">6.什么是中间件？</span><span class="ti" id="ti10" style="left:113px;top:432.7px;transform-origin:0 50%;transform:scaleX(1.001)">主要分类：远程过程调用、面向消息的中间件、对象请求代理、事物处 <b>...</b></span><span class="ti" id="ti11" style="left:113px;top:454.7px;transform-origin:0 50%;transform:scaleX(1.0)">实现原理：</span><div class="a" style="left:77px;top:471px;width:434px;height:22px;background:#c5d6f4"></div><svg style="left:83px;top:480.6px" width="9" height="6" viewBox="0 0 9 6"><path d="M0.500 0.500l4 4.500 4-4.500" stroke="#444" stroke-width="1.100" fill="none"/></svg><span class="ti" id="ti12" style="left:97.5px;top:476.7px;transform-origin:0 50%;transform:scaleX(1.0035)">9.mysql 数据库中,什么情况下设置了索引但无法使用?</span><span class="ti" id="ti13" style="left:113px;top:498.7px;transform-origin:0 50%;transform:scaleX(1.028)">(2)Mysql 索引类型：</span><span class="ti" id="ti14" style="left:113px;top:520.7px;transform-origin:0 50%;transform:scaleX(1.005)">(3)什么情况下有索引，但用不上？</span><span class="ti" id="ti15" style="left:113px;top:542.7px;transform-origin:0 50%;transform:scaleX(1.005)">(4)什么情况下不推荐使用索引？</span><span class="ti" id="ti16" style="left:97.5px;top:564.7px;transform-origin:0 50%;transform:scaleX(1.0106)">10.mysql 优化会不会,mycat 分库,垂直分库,水平分库?</span><svg style="left:83px;top:590.5999999999999px" width="9" height="6" viewBox="0 0 9 6"><path d="M0.500 0.500l4 4.500 4-4.500" stroke="#444" stroke-width="1.100" fill="none"/></svg><span class="ti" id="ti17" style="left:97.5px;top:586.7px;transform-origin:0 50%;transform:scaleX(1.0)">11.分布式事务解决方案?</span><span class="ti" id="ti18" style="left:113px;top:608.7px;transform-origin:0 50%;transform:scaleX(1.005)">(1)什么是分布式事务？</span><span class="ti" id="ti19" style="left:113px;top:630.7px;transform-origin:0 50%;transform:scaleX(1.005)">服务无法同时满足 3 个属性：</span><span class="ti" id="ti20" style="left:113px;top:652.7px;transform-origin:0 50%;transform:scaleX(1.003)">(2)分布式系统中，实现分布式事务的解决方案：</span><span class="ti" id="ti21" style="left:97.5px;top:674.7px;transform-origin:0 50%;transform:scaleX(1.009)">13.mysql 的存储引擎了解过没有?</span><svg style="left:83px;top:700.5999999999999px" width="9" height="6" viewBox="0 0 9 6"><path d="M0.500 0.500l4 4.500 4-4.500" stroke="#444" stroke-width="1.100" fill="none"/></svg><span class="ti" id="ti22" style="left:97.5px;top:696.7px;transform-origin:0 50%;transform:scaleX(1.01)">14.红黑树原理？</span><span class="ti" id="ti23" style="left:113px;top:718.7px;transform-origin:0 50%;transform:scaleX(0.9983)">i.每个节点颜色不是黑色就是红色</span><div class="a" id="docarea"></div><div class="a" style="left:722px;top:132px;width:20px;height:879px;background:linear-gradient(90deg,rgba(120,150,125,0) 0%,rgba(120,150,125,0.12) 45%,rgba(105,135,112,0.50) 100%)"></div><div class="a" style="left:1696px;top:132px;width:22px;height:879px;background:linear-gradient(90deg,rgba(110,140,118,0.42) 0%,rgba(120,150,125,0.1) 50%,rgba(120,150,125,0) 100%)"></div><div class="a" id="page"></div><svg id="dsvg" style="left:530px;top:132px;overflow:hidden" width="1375" height="879" viewBox="530 132 1375 879"><style>#dsvg text{font-family:"Liberation Sans","Noto Serif CJK SC",serif;font-size:16.8px;fill:#000;white-space:pre}#dsvg .e{font-size:14.9px}#dsvg .bd{font-weight:bold}#dsvg .hd{font-weight:600;font-size:20.600px;fill:#0000ff}#dsvg .eh{font-size:19.800px;font-weight:bold}#dsvg .en{font-size:19.800px;font-weight:bold}#dsvg .eN{font-size:17.200px}</style><g><path d="M800.5 155.500h8l4 3.500v11h-12z" fill="#a8bfdc"/><path d="M803 160h6M803 163h7M803 166h5" stroke="#e6eef8" stroke-width="1.200"/><path d="M820 161h5l-2.500 3z" fill="#a9b8c4"/></g><text id="s0" x="919.40" y="130.50" textLength="19.20" lengthAdjust="spacingAndGlyphs" class="bd"><tspan class="eN">(4)</tspan></text>
<text id="s1" x="885.22" y="171.00" textLength="18.06" lengthAdjust="spacingAndGlyphs" class="hd"><tspan class="en">9.</tspan></text>
<text id="s2" x="919.72" y="171.00" textLength="55.16" lengthAdjust="spacingAndGlyphs" class="hd"><tspan class="eh">mysql</tspan></text>
<text id="s3" x="979.83" y="171.00" textLength="443.95" lengthAdjust="spacingAndGlyphs" class="hd">数据库中<tspan class="eh">,</tspan>什么情况下设置了索引但无法使用<tspan class="eh">?</tspan></text>
<path d="M920.5 176.4L922.5 173.6L924.5 176.4L926.5 173.6L928.5 176.4L930.5 173.6L932.5 176.4L934.5 173.6L936.5 176.4L938.5 173.6L940.5 176.4L942.5 173.6L944.5 176.4L946.5 173.6L948.5 176.4L950.5 173.6L952.5 176.4L954.5 173.6L956.5 176.4L958.5 173.6L960.5 176.4L962.5 173.6L964.5 176.4L966.5 173.6L968.5 176.4L970.5 173.6L972.5 176.4L974.5 173.6L976.5 176.4" fill="none" stroke="#f00808" stroke-width="1"/>
<text id="s4" x="919.40" y="206.70" textLength="19.20" lengthAdjust="spacingAndGlyphs" class="bd"><tspan class="eN">(1)</tspan></text>
<text id="s5" x="952.80" y="206.70" class="bd">索引的作用：</text>
<text id="s6" x="1054.60" y="206.70">在数据库表中对字段建立索引可以大大</text>
<text id="s7" x="1340.60" y="206.70" class="bd">提高查询速度。</text>
<text id="s8" x="919.40" y="232.10" textLength="19.20" lengthAdjust="spacingAndGlyphs" class="bd"><tspan class="eN">(2)</tspan></text>
<text id="s9" x="953.50" y="232.10" textLength="42.60" lengthAdjust="spacingAndGlyphs" class="bd"><tspan class="e">Mysql</tspan></text>
<text id="s10" x="1001.10" y="232.10" textLength="83.24" lengthAdjust="spacingAndGlyphs" class="bd">索引类型：</text>
<path d="M953.7 237.4L955.7 234.6L957.7 237.4L959.7 234.6L961.7 237.4L963.7 234.6L965.7 237.4L967.7 234.6L969.7 237.4L971.7 234.6L973.7 237.4L975.7 234.6L977.7 237.4L979.7 234.6L981.7 237.4L983.7 234.6L985.7 237.4L987.7 234.6L989.7 237.4L991.7 234.6L993.7 237.4L995.7 234.6L997.7 237.4" fill="none" stroke="#f00808" stroke-width="1"/>
<text id="s11" x="1053.50" y="257.10" textLength="12.10" lengthAdjust="spacingAndGlyphs"><tspan class="e">a)</tspan></text>
<text id="s12" x="1088.60" y="257.10" textLength="66.30" lengthAdjust="spacingAndGlyphs">普通索引</text>
<text id="s13" x="1054.20" y="283.90" textLength="13.50" lengthAdjust="spacingAndGlyphs"><tspan class="e">b)</tspan></text>
<text id="s14" x="1087.30" y="283.90" textLength="66.60" lengthAdjust="spacingAndGlyphs">唯一索引</text>
<text id="s15" x="1155.60" y="283.90">：</text>
<text id="s16" x="1170.90" y="283.90" textLength="264.00" lengthAdjust="spacingAndGlyphs">唯一索引列的值必须唯一允许有空值</text>
<text id="s17" x="1437.10" y="283.90">，</text>
<text id="s18" x="1454.50" y="283.90" textLength="97.80" lengthAdjust="spacingAndGlyphs">如果是组合索</text>
<text id="s19" x="1088.10" y="307.80" textLength="210.64" lengthAdjust="spacingAndGlyphs">引，则列值的组合必须唯一：</text>
<text id="s20" x="1087.60" y="333.40" textLength="52.40" lengthAdjust="spacingAndGlyphs"><tspan class="e">CREATE</tspan></text>
<text id="s21" x="1144.20" y="333.40" textLength="56.40" lengthAdjust="spacingAndGlyphs"><tspan class="e">UNIQUE</tspan></text>
<text id="s22" x="1203.90" y="333.40" textLength="40.70" lengthAdjust="spacingAndGlyphs"><tspan class="e">INDEX</tspan></text>
<text id="s23" x="1249.40" y="333.40" textLength="78.40" lengthAdjust="spacingAndGlyphs"><tspan class="e">indexName</tspan></text>
<text id="s24" x="1331.40" y="333.40" textLength="21.20" lengthAdjust="spacingAndGlyphs"><tspan class="e">ON</tspan></text>
<text id="s25" x="1356.40" y="333.40" textLength="188.60" lengthAdjust="spacingAndGlyphs"><tspan class="e">mytable(username(length))</tspan></text>
<path d="M1250.0 338.8L1252.0 336.0L1254.0 338.8L1256.0 336.0L1258.0 338.8L1260.0 336.0L1262.0 338.8L1264.0 336.0L1266.0 338.8L1268.0 336.0L1270.0 338.8L1272.0 336.0L1274.0 338.8L1276.0 336.0L1278.0 338.8L1280.0 336.0L1282.0 338.8L1284.0 336.0L1286.0 338.8L1288.0 336.0L1290.0 338.8L1292.0 336.0L1294.0 338.8L1296.0 336.0L1298.0 338.8L1300.0 336.0L1302.0 338.8L1304.0 336.0L1306.0 338.8L1308.0 336.0L1310.0 338.8L1312.0 336.0L1314.0 338.8L1316.0 336.0L1318.0 338.8L1320.0 336.0L1322.0 338.8L1324.0 336.0L1326.0 338.8L1328.0 336.0" fill="none" stroke="#f00808" stroke-width="1"/>
<path d="M1357.0 338.8L1359.0 336.0L1361.0 338.8L1363.0 336.0L1365.0 338.8L1367.0 336.0L1369.0 338.8L1371.0 336.0L1373.0 338.8L1375.0 336.0L1377.0 338.8L1379.0 336.0L1381.0 338.8L1383.0 336.0L1385.0 338.8L1387.0 336.0L1389.0 338.8L1391.0 336.0L1393.0 338.8L1395.0 336.0L1397.0 338.8L1399.0 336.0L1401.0 338.8L1403.0 336.0L1405.0 338.8L1407.0 336.0L1409.0 338.8L1411.0 336.0L1413.0 338.8L1415.0 336.0" fill="none" stroke="#f00808" stroke-width="1"/>
<text id="s26" x="1088.60" y="358.40" textLength="8.80" lengthAdjust="spacingAndGlyphs"><tspan class="e">--</tspan></text>
<text id="s27" x="1102.10" y="358.40" textLength="83.20" lengthAdjust="spacingAndGlyphs">修改表结构</text>
<text id="s28" x="1088.60" y="382.70" textLength="41.20" lengthAdjust="spacingAndGlyphs"><tspan class="e">ALTER</tspan></text>
<text id="s29" x="1133.40" y="382.70" textLength="57.00" lengthAdjust="spacingAndGlyphs"><tspan class="e">mytable</tspan></text>
<text id="s30" x="1193.40" y="382.70" textLength="29.60" lengthAdjust="spacingAndGlyphs"><tspan class="e">ADD</tspan></text>
<text id="s31" x="1226.80" y="382.70" textLength="56.00" lengthAdjust="spacingAndGlyphs"><tspan class="e">UNIQUE</tspan></text>
<text id="s32" x="1287.40" y="382.70" textLength="88.00" lengthAdjust="spacingAndGlyphs"><tspan class="e">[indexName]</tspan></text>
<text id="s33" x="1379.50" y="382.70" textLength="21.10" lengthAdjust="spacingAndGlyphs"><tspan class="e">ON</tspan></text>
<text id="s34" x="1405.20" y="382.70" textLength="131.30" lengthAdjust="spacingAndGlyphs"><tspan class="e">(username(length))</tspan></text>
<path d="M1134.0 388.1L1136.0 385.3L1138.0 388.1L1140.0 385.3L1142.0 388.1L1144.0 385.3L1146.0 388.1L1148.0 385.3L1150.0 388.1L1152.0 385.3L1154.0 388.1L1156.0 385.3L1158.0 388.1L1160.0 385.3L1162.0 388.1L1164.0 385.3L1166.0 388.1L1168.0 385.3L1170.0 388.1L1172.0 385.3L1174.0 388.1L1176.0 385.3L1178.0 388.1L1180.0 385.3L1182.0 388.1L1184.0 385.3L1186.0 388.1L1188.0 385.3L1190.0 388.1" fill="none" stroke="#f00808" stroke-width="1"/>
<path d="M1293.0 388.1L1295.0 385.3L1297.0 388.1L1299.0 385.3L1301.0 388.1L1303.0 385.3L1305.0 388.1L1307.0 385.3L1309.0 388.1L1311.0 385.3L1313.0 388.1L1315.0 385.3L1317.0 388.1L1319.0 385.3L1321.0 388.1L1323.0 385.3L1325.0 388.1L1327.0 385.3L1329.0 388.1L1331.0 385.3L1333.0 388.1L1335.0 385.3L1337.0 388.1L1339.0 385.3L1341.0 388.1L1343.0 385.3L1345.0 388.1L1347.0 385.3L1349.0 388.1L1351.0 385.3L1353.0 388.1L1355.0 385.3L1357.0 388.1L1359.0 385.3L1361.0 388.1L1363.0 385.3L1365.0 388.1L1367.0 385.3L1369.0 388.1L1371.0 385.3L1373.0 388.1" fill="none" stroke="#f00808" stroke-width="1"/>
<text id="s35" x="1088.60" y="407.20" textLength="8.80" lengthAdjust="spacingAndGlyphs"><tspan class="e">--</tspan></text>
<text id="s36" x="1102.30" y="407.20" textLength="167.20" lengthAdjust="spacingAndGlyphs">创建表的时候直接指定</text>
<text id="s37" x="1088.60" y="432.90" textLength="50.20" lengthAdjust="spacingAndGlyphs"><tspan class="e">CREATE</tspan></text>
<text id="s38" x="1143.20" y="432.90" textLength="39.40" lengthAdjust="spacingAndGlyphs"><tspan class="e">TABLE</tspan></text>
<text id="s39" x="1186.00" y="432.90" textLength="60.70" lengthAdjust="spacingAndGlyphs"><tspan class="e">mytable(</tspan></text>
<text id="s40" x="1250.90" y="432.90" textLength="14.70" lengthAdjust="spacingAndGlyphs"><tspan class="e">ID</tspan></text>
<text id="s41" x="1269.40" y="432.90" textLength="21.60" lengthAdjust="spacingAndGlyphs"><tspan class="e">INT</tspan></text>
<text id="s42" x="1297.40" y="432.90" textLength="29.60" lengthAdjust="spacingAndGlyphs"><tspan class="e">NOT</tspan></text>
<text id="s43" x="1331.90" y="432.90" textLength="38.90" lengthAdjust="spacingAndGlyphs"><tspan class="e">NULL,</tspan></text>
<text id="s44" x="1392.40" y="432.90" textLength="67.20" lengthAdjust="spacingAndGlyphs"><tspan class="e">username</tspan></text>
<text id="s45" x="1465.20" y="432.90" textLength="92.60" lengthAdjust="spacingAndGlyphs"><tspan class="e">VARCHAR(16)</tspan></text>
<path d="M1186.2 438.4L1188.2 435.6L1190.2 438.4L1192.2 435.6L1194.2 438.4L1196.2 435.6L1198.2 438.4L1200.2 435.6L1202.2 438.4L1204.2 435.6L1206.2 438.4L1208.2 435.6L1210.2 438.4L1212.2 435.6L1214.2 438.4L1216.2 435.6L1218.2 438.4L1220.2 435.6L1222.2 438.4L1224.2 435.6L1226.2 438.4L1228.2 435.6L1230.2 438.4L1232.2 435.6L1234.2 438.4L1236.2 435.6L1238.2 438.4L1240.2 435.6L1242.2 438.4L1244.2 435.6" fill="none" stroke="#f00808" stroke-width="1"/>
<text id="s46" x="1087.60" y="457.80" textLength="30.60" lengthAdjust="spacingAndGlyphs"><tspan class="e">NOT</tspan></text>
<text id="s47" x="1122.40" y="457.80" textLength="39.70" lengthAdjust="spacingAndGlyphs"><tspan class="e">NULL,</tspan></text>
<text id="s48" x="1165.40" y="457.80" textLength="55.20" lengthAdjust="spacingAndGlyphs"><tspan class="e">UNIQUE</tspan></text>
<text id="s49" x="1224.40" y="457.80" textLength="87.40" lengthAdjust="spacingAndGlyphs"><tspan class="e">[indexName]</tspan></text>
<text id="s50" x="1316.40" y="457.80" textLength="131.80" lengthAdjust="spacingAndGlyphs"><tspan class="e">(username(length))</tspan></text>
<text id="s51" x="1464.20" y="457.80" textLength="9.40" lengthAdjust="spacingAndGlyphs"><tspan class="e">);</tspan></text>
<path d="M1229.0 463.6L1231.0 460.8L1233.0 463.6L1235.0 460.8L1237.0 463.6L1239.0 460.8L1241.0 463.6L1243.0 460.8L1245.0 463.6L1247.0 460.8L1249.0 463.6L1251.0 460.8L1253.0 463.6L1255.0 460.8L1257.0 463.6L1259.0 460.8L1261.0 463.6L1263.0 460.8L1265.0 463.6L1267.0 460.8L1269.0 463.6L1271.0 460.8L1273.0 463.6L1275.0 460.8L1277.0 463.6L1279.0 460.8L1281.0 463.6L1283.0 460.8L1285.0 463.6L1287.0 460.8L1289.0 463.6L1291.0 460.8L1293.0 463.6L1295.0 460.8L1297.0 463.6L1299.0 460.8L1301.0 463.6L1303.0 460.8L1305.0 463.6L1307.0 460.8L1309.0 463.6" fill="none" stroke="#f00808" stroke-width="1"/>
<text id="s52" x="1054.20" y="483.50" textLength="11.30" lengthAdjust="spacingAndGlyphs"><tspan class="e">c)</tspan></text>
<text id="s53" x="1087.30" y="483.50" textLength="64.20" lengthAdjust="spacingAndGlyphs">主键索引</text>
<text id="s54" x="1153.60" y="483.50">：</text>
<text id="s55" x="1167.10" y="483.50" textLength="141.40" lengthAdjust="spacingAndGlyphs">一种特殊的唯一索引</text>
<text id="s56" x="1309.10" y="483.50">，</text>
<text id="s57" x="1323.90" y="483.50" textLength="93.40" lengthAdjust="spacingAndGlyphs">不允许有空值</text>
<text id="s58" x="1418.60" y="483.50">，</text>
<text id="s59" x="1434.00" y="483.50" textLength="93.90" lengthAdjust="spacingAndGlyphs">一般在创建表</text>
<text id="s60" x="1536.10" y="483.50" textLength="16.40" lengthAdjust="spacingAndGlyphs">的</text>
<text id="s61" x="1087.30" y="508.40" textLength="146.34" lengthAdjust="spacingAndGlyphs">时候创建主键索引：</text>
<text id="s62" x="1088.60" y="533.70" textLength="50.20" lengthAdjust="spacingAndGlyphs"><tspan class="e">CREATE</tspan></text>
<text id="s63" x="1149.50" y="533.70" textLength="39.90" lengthAdjust="spacingAndGlyphs"><tspan class="e">TABLE</tspan></text>
<text id="s64" x="1199.30" y="533.70" textLength="61.70" lengthAdjust="spacingAndGlyphs"><tspan class="e">mytable(</tspan></text>
<text id="s65" x="1298.30" y="533.70" textLength="14.70" lengthAdjust="spacingAndGlyphs"><tspan class="e">ID</tspan></text>
<text id="s66" x="1324.60" y="533.70" textLength="21.50" lengthAdjust="spacingAndGlyphs"><tspan class="e">INT</tspan></text>
<text id="s67" x="1354.90" y="533.70" textLength="29.20" lengthAdjust="spacingAndGlyphs"><tspan class="e">NOT</tspan></text>
<text id="s68" x="1396.20" y="533.70" textLength="40.40" lengthAdjust="spacingAndGlyphs"><tspan class="e">NULL,</tspan></text>
<text id="s69" x="1483.30" y="533.70" textLength="67.50" lengthAdjust="spacingAndGlyphs"><tspan class="e">username</tspan></text>
<path d="M1200.3 539.4L1202.3 536.6L1204.3 539.4L1206.3 536.6L1208.3 539.4L1210.3 536.6L1212.3 539.4L1214.3 536.6L1216.3 539.4L1218.3 536.6L1220.3 539.4L1222.3 536.6L1224.3 539.4L1226.3 536.6L1228.3 539.4L1230.3 536.6L1232.3 539.4L1234.3 536.6L1236.3 539.4L1238.3 536.6L1240.3 539.4L1242.3 536.6L1244.3 539.4L1246.3 536.6L1248.3 539.4L1250.3 536.6L1252.3 539.4L1254.3 536.6L1256.3 539.4" fill="none" stroke="#f00808" stroke-width="1"/>
<text id="s70" x="1088.60" y="557.50" textLength="93.60" lengthAdjust="spacingAndGlyphs"><tspan class="e">VARCHAR(16)</tspan></text>
<text id="s71" x="1185.50" y="557.50" textLength="28.60" lengthAdjust="spacingAndGlyphs"><tspan class="e">NOT</tspan></text>
<text id="s72" x="1219.40" y="557.50" textLength="40.60" lengthAdjust="spacingAndGlyphs"><tspan class="e">NULL,</tspan></text>
<text id="s73" x="1263.20" y="557.50" textLength="63.30" lengthAdjust="spacingAndGlyphs"><tspan class="e">PRIMARY</tspan></text>
<text id="s74" x="1330.40" y="557.50" textLength="48.90" lengthAdjust="spacingAndGlyphs"><tspan class="e">KEY(ID)</tspan></text>
<text id="s75" x="1385.90" y="557.50" textLength="9.60" lengthAdjust="spacingAndGlyphs"><tspan class="e">);</tspan></text>
<text id="s76" x="1054.60" y="583.75" textLength="12.00" lengthAdjust="spacingAndGlyphs"><tspan class="e">d)</tspan></text>
<text id="s77" x="1088.35" y="583.75" textLength="94.89" lengthAdjust="spacing">组合索引：</text>
<text id="s78" x="1183.40" y="583.75" textLength="51.20" lengthAdjust="spacingAndGlyphs"><tspan class="e">CREATE</tspan></text>
<text id="s79" x="1238.30" y="583.75" textLength="39.10" lengthAdjust="spacingAndGlyphs"><tspan class="e">TABLE</tspan></text>
<text id="s80" x="1283.40" y="583.75" textLength="61.10" lengthAdjust="spacingAndGlyphs"><tspan class="e">mytable(</tspan></text>
<text id="s81" x="1351.50" y="583.75" textLength="14.70" lengthAdjust="spacingAndGlyphs"><tspan class="e">ID</tspan></text>
<text id="s82" x="1373.40" y="583.75" textLength="21.20" lengthAdjust="spacingAndGlyphs"><tspan class="e">INT</tspan></text>
<text id="s83" x="1404.00" y="583.75" textLength="28.90" lengthAdjust="spacingAndGlyphs"><tspan class="e">NOT</tspan></text>
<text id="s84" x="1438.30" y="583.75" textLength="41.40" lengthAdjust="spacingAndGlyphs"><tspan class="e">NULL,</tspan></text>
<text id="s85" x="1486.20" y="583.75" textLength="68.40" lengthAdjust="spacingAndGlyphs"><tspan class="e">username</tspan></text>
<path d="M1284.0 589.1L1286.0 586.3L1288.0 589.1L1290.0 586.3L1292.0 589.1L1294.0 586.3L1296.0 589.1L1298.0 586.3L1300.0 589.1L1302.0 586.3L1304.0 589.1L1306.0 586.3L1308.0 589.1L1310.0 586.3L1312.0 589.1L1314.0 586.3L1316.0 589.1L1318.0 586.3L1320.0 589.1L1322.0 586.3L1324.0 589.1L1326.0 586.3L1328.0 589.1L1330.0 586.3L1332.0 589.1L1334.0 586.3L1336.0 589.1L1338.0 586.3L1340.0 589.1L1342.0 586.3" fill="none" stroke="#f00808" stroke-width="1"/>
<text id="s86" x="1088.60" y="609.60" textLength="93.60" lengthAdjust="spacingAndGlyphs"><tspan class="e">VARCHAR(16)</tspan></text>
<text id="s87" x="1189.20" y="609.60" textLength="29.20" lengthAdjust="spacingAndGlyphs"><tspan class="e">NOT</tspan></text>
<text id="s88" x="1226.80" y="609.60" textLength="40.00" lengthAdjust="spacingAndGlyphs"><tspan class="e">NULL,</tspan></text>
<text id="s89" x="1273.40" y="609.60" textLength="24.80" lengthAdjust="spacingAndGlyphs"><tspan class="e">city</tspan></text>
<text id="s90" x="1305.50" y="609.60" textLength="95.10" lengthAdjust="spacingAndGlyphs"><tspan class="e">VARCHAR(50)</tspan></text>
<text id="s91" x="1406.80" y="609.60" textLength="29.30" lengthAdjust="spacingAndGlyphs"><tspan class="e">NOT</tspan></text>
<text id="s92" x="1444.90" y="609.60" textLength="41.40" lengthAdjust="spacingAndGlyphs"><tspan class="e">NULL,</tspan></text>
<text id="s93" x="1499.80" y="609.60" textLength="23.90" lengthAdjust="spacingAndGlyphs"><tspan class="e">age</tspan></text>
<text id="s94" x="1531.50" y="609.60" textLength="22.90" lengthAdjust="spacingAndGlyphs"><tspan class="e">INT</tspan></text>
<text id="s95" x="1087.60" y="633.75" textLength="69.50" lengthAdjust="spacingAndGlyphs"><tspan class="e">NOT NULL</tspan></text>
<text id="s96" x="1162.40" y="633.75" textLength="9.60" lengthAdjust="spacingAndGlyphs"><tspan class="e">);</tspan></text>
<text id="s97" x="1087.30" y="659.70" textLength="115.10" lengthAdjust="spacingAndGlyphs">为了进一步榨取</text>
<text id="s98" x="1210.40" y="659.70" textLength="48.20" lengthAdjust="spacingAndGlyphs"><tspan class="e">MySQL</tspan></text>
<text id="s99" x="1262.90" y="659.70" textLength="285.80" lengthAdjust="spacing">的效率，就要考虑建立组合索引。就是</text>
<path d="M1211.0 666.0L1213.0 663.2L1215.0 666.0L1217.0 663.2L1219.0 666.0L1221.0 663.2L1223.0 666.0L1225.0 663.2L1227.0 666.0L1229.0 663.2L1231.0 666.0L1233.0 663.2L1235.0 666.0L1237.0 663.2L1239.0 666.0L1241.0 663.2L1243.0 666.0L1245.0 663.2L1247.0 666.0L1249.0 663.2L1251.0 666.0L1253.0 663.2L1255.0 666.0L1257.0 663.2L1259.0 666.0" fill="none" stroke="#f00808" stroke-width="1"/>
<text id="s100" x="1088.30" y="684.40" textLength="15.60" lengthAdjust="spacingAndGlyphs">将</text>
<text id="s101" x="1113.50" y="684.40" textLength="101.30" lengthAdjust="spacingAndGlyphs"><tspan class="e">name, city, age</tspan></text>
<text id="s102" x="1218.30" y="684.40" textLength="207.00" lengthAdjust="spacingAndGlyphs">建到一个索引里：代码如下<tspan class="e">:</tspan></text>
<text id="s103" x="1088.60" y="708.60" textLength="41.20" lengthAdjust="spacingAndGlyphs"><tspan class="e">ALTER</tspan></text>
<text id="s104" x="1135.40" y="708.60" textLength="39.20" lengthAdjust="spacingAndGlyphs"><tspan class="e">TABLE</tspan></text>
<text id="s105" x="1179.40" y="708.60" textLength="56.40" lengthAdjust="spacingAndGlyphs"><tspan class="e">mytable</tspan></text>
<text id="s106" x="1240.00" y="708.60" textLength="29.20" lengthAdjust="spacingAndGlyphs"><tspan class="e">ADD</tspan></text>
<text id="s107" x="1273.80" y="708.60" textLength="41.80" lengthAdjust="spacingAndGlyphs"><tspan class="e">INDEX</tspan></text>
<text id="s108" x="1320.20" y="708.60" textLength="104.10" lengthAdjust="spacingAndGlyphs"><tspan class="e">name_city_age</tspan></text>
<path d="M1180.0 714.0L1182.0 711.2L1184.0 714.0L1186.0 711.2L1188.0 714.0L1190.0 711.2L1192.0 714.0L1194.0 711.2L1196.0 714.0L1198.0 711.2L1200.0 714.0L1202.0 711.2L1204.0 714.0L1206.0 711.2L1208.0 714.0L1210.0 711.2L1212.0 714.0L1214.0 711.2L1216.0 714.0L1218.0 711.2L1220.0 714.0L1222.0 711.2L1224.0 714.0L1226.0 711.2L1228.0 714.0L1230.0 711.2L1232.0 714.0L1234.0 711.2L1236.0 714.0" fill="none" stroke="#f00808" stroke-width="1"/>
<text id="s109" x="1089.00" y="733.70" textLength="136.20" lengthAdjust="spacingAndGlyphs"><tspan class="e">(name(10),city,age);</tspan></text>
<text id="s110" x="919.40" y="759.70" textLength="19.20" lengthAdjust="spacingAndGlyphs" class="bd"><tspan class="eN">(3)</tspan></text>
<text id="s111" x="954.10" y="759.70" textLength="238.26" lengthAdjust="spacingAndGlyphs" class="bd">什么情况下有索引，但用不上？</text>
<text id="s112" x="1054.20" y="783.50" textLength="11.40" lengthAdjust="spacingAndGlyphs"><tspan class="e">a)</tspan></text>
<text id="s113" x="1087.30" y="783.50" textLength="96.80" lengthAdjust="spacingAndGlyphs">如果条件中有</text>
<text id="s114" x="1193.30" y="783.50" textLength="20.70" lengthAdjust="spacingAndGlyphs" class="bd"><tspan class="e">OR</tspan></text>
<text id="s115" x="1214.40" y="783.50">，</text>
<text id="s116" x="1230.90" y="783.50" textLength="305.34" lengthAdjust="spacing">即使其中有部分条件带索引也不会使用。</text>
<text id="s117" x="1535.10" y="783.50" textLength="16.00" lengthAdjust="spacingAndGlyphs" class="bd">注</text>
<text id="s118" x="1087.50" y="808.90" class="bd">意：</text>
<text id="s119" x="1121.10" y="808.90" textLength="65.20" lengthAdjust="spacingAndGlyphs">要想使用</text>
<text id="s120" x="1193.30" y="808.90" textLength="14.90" lengthAdjust="spacingAndGlyphs"><tspan class="e">or</tspan></text>
<text id="s121" x="1211.60" y="808.90">，</text>
<text id="s122" x="1224.70" y="808.90" textLength="181.00" lengthAdjust="spacing">又想让索引生效，只能将</text>
<text id="s123" x="1413.40" y="808.90" textLength="15.00" lengthAdjust="spacingAndGlyphs"><tspan class="e">or</tspan></text>
<text id="s124" x="1432.20" y="808.90" textLength="118.90" lengthAdjust="spacing">条件中的每个列</text>
<text id="s125" x="1087.30" y="833.70" textLength="103.94" lengthAdjust="spacingAndGlyphs">都加上索引。</text>
<text id="s126" x="1054.20" y="859.40" textLength="13.50" lengthAdjust="spacingAndGlyphs"><tspan class="e">b)</tspan></text>
<text id="s127" x="1087.30" y="859.40" textLength="119.94" lengthAdjust="spacingAndGlyphs">对于多了索引，</text>
<text id="s128" x="1205.10" y="859.40" textLength="152.00" lengthAdjust="spacingAndGlyphs" class="bd">不是使用的第一部分</text>
<text id="s129" x="1357.60" y="859.40">，</text>
<text id="s130" x="1373.90" y="859.40" textLength="136.34" lengthAdjust="spacingAndGlyphs">则不会使用索引。</text>
<text id="s131" x="1054.20" y="885.00" textLength="11.30" lengthAdjust="spacingAndGlyphs"><tspan class="e">c)</tspan></text>
<text id="s132" x="1087.60" y="885.00" textLength="27.50" lengthAdjust="spacingAndGlyphs"><tspan class="e">Like</tspan></text>
<text id="s133" x="1118.20" y="885.00" textLength="198.30" lengthAdjust="spacingAndGlyphs">查询以<tspan class="e">%</tspan>开头，不使用索引</text>
<text id="s134" x="1054.60" y="909.90" textLength="12.00" lengthAdjust="spacingAndGlyphs"><tspan class="e">d)</tspan></text>
<text id="s135" x="1087.30" y="909.90" textLength="219.40" lengthAdjust="spacingAndGlyphs">存在索引列的数据类型隐形转换</text>
<text id="s136" x="1308.60" y="909.90">，</text>
<text id="s137" x="1323.90" y="909.90" textLength="93.90" lengthAdjust="spacingAndGlyphs">则用不上索引</text>
<text id="s138" x="1418.10" y="909.90">，</text>
<text id="s139" x="1433.10" y="909.90" textLength="94.30" lengthAdjust="spacingAndGlyphs">比如列类型是</text>
<text id="s140" x="1535.60" y="909.90" textLength="15.50" lengthAdjust="spacingAndGlyphs">字</text>
<text id="s141" x="1087.30" y="934.30" textLength="34.60" lengthAdjust="spacingAndGlyphs">符串</text>
<text id="s142" x="1122.60" y="934.30">，</text>
<text id="s143" x="1138.10" y="934.30" textLength="412.80" lengthAdjust="spacingAndGlyphs">那一定要在条件中将数据使用引号引用起来<tspan class="e">,</tspan>否则不使用</text>
<text id="s144" x="1088.30" y="959.80" textLength="33.90" lengthAdjust="spacingAndGlyphs">索引</text>
<text id="s145" x="1054.20" y="985.60" textLength="12.40" lengthAdjust="spacingAndGlyphs"><tspan class="e">e)</tspan></text>
<text id="s146" x="1088.60" y="985.60" textLength="45.20" lengthAdjust="spacingAndGlyphs"><tspan class="e">Where</tspan></text>
<text id="s147" x="1137.30" y="985.60" textLength="320.40" lengthAdjust="spacingAndGlyphs">子句里对索引列上有数学运算，用不上索引</text>
<text id="s148" x="1055.20" y="1010.40" textLength="7.90" lengthAdjust="spacingAndGlyphs"><tspan class="e">f)</tspan></text>
<text id="s149" x="1088.60" y="1010.40" textLength="45.20" lengthAdjust="spacingAndGlyphs"><tspan class="e">Where</tspan></text>
<text id="s150" x="1137.30" y="1010.40" textLength="287.10" lengthAdjust="spacingAndGlyphs">子句中对索引列使用函数，用不上索引</text></svg><div class="a" style="left:0;top:132px;width:1920px;height:3px;background:linear-gradient(180deg,rgba(0,0,0,0.09),rgba(0,0,0,0))"></div><div class="a" id="vscroll"></div><div class="a" style="left:1906px;top:132px;width:14px;height:19px;background:#ececec"></div><svg style="left:1908px;top:138px" width="9" height="8" viewBox="0 0 9 8"><path d="M1.500 0h6L4.500 3.500z" fill="#888"/><path d="M0.500 4v3.500h8V4M3.200 5.500v2M5.800 5.500v2" stroke="#888" stroke-width="1" fill="none"/></svg><svg style="left:1909px;top:157px" width="7" height="4" viewBox="0 0 7 4"><path d="M0 4h7L3.500 0z" fill="#777"/></svg><div class="a" style="left:1907px;top:514px;width:12px;height:65px;background:#fdfdfd;border:1px solid #c9c9c9;border-radius:5px;box-sizing:border-box"></div><div class="a" style="left:1910px;top:777px;width:10px;height:59px;background:linear-gradient(90deg,#4a505e,#5a606e);border:1px solid #3d4250;border-right:none;border-radius:3px 0 0 3px;box-sizing:border-box"></div><div class="a" style="left:1914px;top:784px;width:4px;height:46px;background:repeating-linear-gradient(180deg,rgba(0,0,0,0) 0,rgba(0,0,0,0) 1px,#525866 1px,#525866 2px),linear-gradient(180deg,#30364a 0%,#30364a 30%,#f2c040 31%,#e8dc48 48%,#a8dc60 65%,#58d8a0 85%,#38d0c0 100%)"></div><svg style="left:1909px;top:943px" width="7" height="4" viewBox="0 0 7 4"><path d="M0 0h7L3.500 4z" fill="#777"/></svg><svg style="left:1909px;top:958px" width="7" height="8" viewBox="0 0 7 8"><path d="M0 3.500h7L3.500 0zM0 8h7L3.500 4.500z" fill="#777"/></svg><svg style="left:1909px;top:977px" width="7" height="7" viewBox="0 0 7 7"><rect x="0.500" y="0.500" width="6" height="6" rx="1" fill="none" stroke="#777"/></svg><svg style="left:1909px;top:994px" width="7" height="8" viewBox="0 0 7 8"><path d="M0 0h7L3.500 3.500zM0 4.500h7L3.500 8z" fill="#777"/></svg><div class="a" id="status"></div><span class="st" style="left:9px">页码: 4</span><span class="st" style="left:62px">页面: 4/7</span><span class="st" style="left:127px">节: 6/9</span><span class="st" style="left:179px">设置值: 3.8厘米</span><span class="st" style="left:279px">行: 3</span><span class="st" style="left:316px">列: 1</span><span class="st" style="left:363px">字数: 3966</span><span class="st" style="left:456px">拼写检查</span><span class="st" style="left:543px">文档校对</span><span class="st" style="left:610px">兼容模式</span><div class="sep" style="left:55px;top:1016px;height:20px;background:#e2e2e2"></div><div class="sep" style="left:118px;top:1016px;height:20px;background:#e2e2e2"></div><div class="sep" style="left:269px;top:1016px;height:20px;background:#e2e2e2"></div><div class="sep" style="left:353px;top:1016px;height:20px;background:#e2e2e2"></div><div class="sep" style="left:428px;top:1016px;height:20px;background:#e2e2e2"></div><div class="sep" style="left:664px;top:1016px;height:20px;background:#e2e2e2"></div><svg style="left:437px;top:1020px" width="15" height="13" viewBox="0 0 15 13"><path class="ic" d="M1 0.600h13v8.800H7.500L4.500 12V9.400H1z" stroke-width="1.100"/><path d="M4.500 4.800l2 2 3.800-3.800" stroke="#444" stroke-width="1.100" fill="none"/></svg><svg style="left:524px;top:1020px" width="15" height="12" viewBox="0 0 15 12"><path class="ic" d="M0.600 3V0.600h13.800v10.800H0.600V9" stroke-width="1.100"/><path d="M5 3.500l5 5M10 3.500l-5 5" stroke="#444" stroke-width="1.100"/></svg><svg style="left:1445px;top:1019px" width="15" height="15" viewBox="0 0 15 15"><path class="ic" d="M9.500 0.700h4.800v4.800M14 1L9 6M5.500 14.300H0.700V9.500M1 14l5-5M0.700 4V0.700H4M14.300 11v3.300H11" stroke-width="1.100"/></svg><svg style="left:1471px;top:1020px" width="15" height="13" viewBox="0 0 15 13"><path class="ic" d="M7.500 1.800C6 0.800 3.500 0.600 0.600 0.800v10.400c2.900-.2 5.400 0 6.900 1 1.500-1 4-1.200 6.900-1V0.800C11.500 0.600 9 0.800 7.500 1.800zM7.500 1.800v10.400" stroke-width="1.100"/></svg><svg style="left:1497px;top:1018px" width="16" height="16" viewBox="0 0 16 16"><path class="ic" d="M3 10.500L11.500 2a1.400 1.400 0 0 1 2 0l.5.500a1.400 1.400 0 0 1 0 2L5.500 13l-3.300.800zM10.300 3.200l2.500 2.500" stroke-width="1.100"/><path d="M0 15.400h16" stroke="#444" stroke-width="1.100"/></svg><div class="a" style="left:1519px;top:1014px;width:23px;height:24px;background:#c6c6c6;border-radius:3px"></div><svg style="left:1524px;top:1018px" width="14" height="16" viewBox="0 0 14 16"><path class="ic" d="M2 0.700h7.500l3.800 3.300v10a1.300 1.300 0 0 1-1.300 1.300H2A1.300 1.300 0 0 1 0.700 14V2A1.300 1.300 0 0 1 2 0.700z" stroke="#333"/><path d="M3.500 7h7M3.500 10.500h7" stroke="#333" stroke-width="1.200"/></svg><svg style="left:1549px;top:1019px" width="15" height="14" viewBox="0 0 15 14"><rect class="ic" x="0.600" y="0.600" width="13.800" height="12.800" rx="1.200" stroke-width="1.100"/><path d="M3 4h1.500M6 4h6M3 7h1.500M6 7h6M3 10h1.500M6 10h6" stroke="#444" stroke-width="1.100"/></svg><svg style="left:1575px;top:1019px" width="15" height="15" viewBox="0 0 15 15"><g class="ic" stroke-width="1.100"><circle cx="7.500" cy="7.500" r="6.900"/><ellipse cx="7.500" cy="7.500" rx="3.200" ry="6.900"/><path d="M0.600 7.500h13.800M7.500 0.600v13.800M1.600 4h11.800M1.600 11h11.800"/></g></svg><div class="a" style="left:1596px;top:1014px;width:24px;height:24px;background:#c6c6c6;border-radius:3px"></div><svg style="left:1600px;top:1017px" width="17" height="17" viewBox="0 0 17 17"><g class="ic" stroke="#444" stroke-width="1.100"><path d="M0.700 11.500c2-3.300 4.600-5 7.800-5s5.800 1.700 7.800 5c-2 3.300-4.600 5-7.800 5s-5.800-1.700-7.800-5z"/><circle cx="8.500" cy="11.500" r="2.800"/><path d="M8.500 0.600v3.600M2.500 2l1.800 3M14.500 2l-1.800 3"/></g></svg><div class="sep" style="left:1629px;top:1015px;height:22px;background:#e2e2e2"></div><span class="st" style="left:1641px;color:#666;font-size:12.500px;top:1019.500px">120%</span><div class="dd" style="left:1678px;top:1025px;border-top-color:#888;border-left-width:2.500px;border-right-width:2.500px;border-top-width:3px"></div><div class="a" style="left:1694px;top:1025px;width:12px;height:2px;background:#333"></div><div class="a" style="left:1717px;top:1026px;width:138px;height:1px;background:#8a8a8a"></div><div class="a" style="left:1783px;top:1020px;width:12px;height:12px;border-radius:6px;background:#fdfdfd;border:1.300px solid #333;box-sizing:border-box"></div><div class="a" style="left:1866px;top:1025px;width:12px;height:2px;background:#333"></div><div class="a" style="left:1871px;top:1020px;width:2px;height:12px;background:#333"></div><svg style="left:1891px;top:1019px" width="13" height="14" viewBox="0 0 13 14"><path class="ic" d="M0.600 4V1.800A1.200 1.200 0 0 1 1.800 0.600H4M9 0.600h2.200a1.200 1.200 0 0 1 1.200 1.200V4M12.400 10v2.200a1.200 1.200 0 0 1-1.200 1.200H9M4 13.400H1.800a1.200 1.200 0 0 1-1.200-1.200V10" stroke-width="1.200"/><path d="M5 7h3" stroke="#444" stroke-width="1.600"/></svg></body></html>
